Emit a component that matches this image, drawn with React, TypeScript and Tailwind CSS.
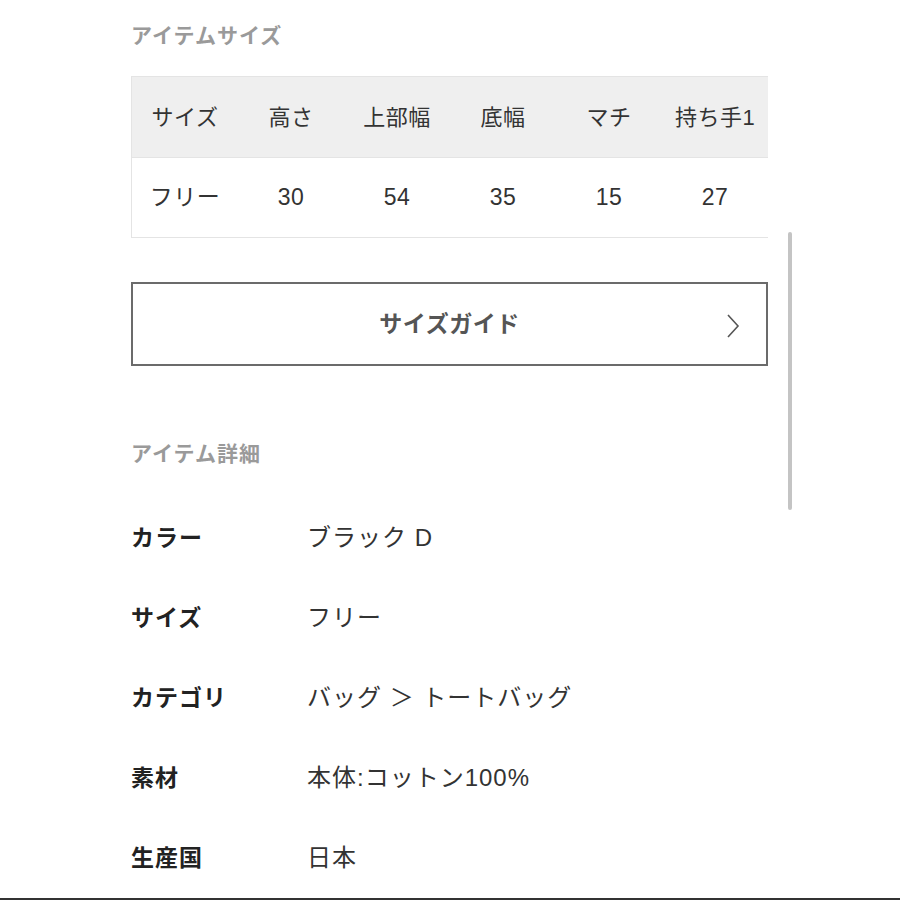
import React from "react";

const cols = [
  { head: "サイズ", val: "フリー" },
  { head: "高さ", val: "30" },
  { head: "上部幅", val: "54" },
  { head: "底幅", val: "35" },
  { head: "マチ", val: "15" },
  { head: "持ち手1", val: "27" },
];

const details = [
  { label: "カラー", value: "ブラック D" },
  { label: "サイズ", value: "フリー" },
  { label: "カテゴリ", value: "バッグ ＞ トートバッグ" },
  { label: "素材", value: "本体:コットン100%" },
  { label: "生産国", value: "日本" },
];

const font = { fontFamily: '"Liberation Sans", "Noto Sans CJK JP", sans-serif' };

export default function App() {
  return (
    <div
      className="relative w-[900px] h-[900px] overflow-hidden bg-white text-[#333]"
      style={font}
    >
      <div className="pl-[131px] w-[769px]">
        {/* アイテムサイズ */}
        <h2 className="pt-[24px] h-[76px] text-[21px] leading-[24px] font-bold tracking-[1px] text-[#9a9a9a]">
          アイテムサイズ
        </h2>

        <div className="w-[637px] border-t border-l border-b border-[#e4e4e4]">
          <div className="grid grid-cols-6 h-[81px] bg-[#efefef] items-center border-b border-[#e4e4e4]">
            {cols.map((c) => (
              <div key={c.head} className="text-center text-[22px] tracking-[0.5px] text-[#333]">
                {c.head}
              </div>
            ))}
          </div>
          <div className="grid grid-cols-6 h-[79px] items-center">
            {cols.map((c) => (
              <div key={c.head} className="text-center text-[23px] tracking-[0.5px] text-[#333]">
                {c.val}
              </div>
            ))}
          </div>
        </div>

        <button className="mt-[44px] w-[637px] h-[84px] border-2 border-[#6b6b6b] flex items-center relative bg-white">
          <span className="flex-1 text-center text-[23px] font-bold tracking-[0.5px] text-[#555]">
            サイズガイド
          </span>
          <svg
            className="absolute right-[26px] top-[30px]"
            width="14"
            height="24"
            viewBox="0 0 14 24"
            fill="none"
            stroke="#555"
            strokeWidth="1.6"
          >
            <path d="M2 1 L12 12 L2 23" />
          </svg>
        </button>

        {/* アイテム詳細 */}
        <h2 className="mt-[76px] text-[21px] leading-[24px] font-bold tracking-[1px] text-[#9a9a9a]">
          アイテム詳細
        </h2>

        <div className="mt-[32px]">
          {details.map((d) => (
            <div key={d.label} className="flex items-center h-[80px]">
              <div className="w-[176px] text-[23px] font-bold tracking-[1px] text-[#222]">{d.label}</div>
              <div className="text-[24px] tracking-[1px] text-[#333]">{d.value}</div>
            </div>
          ))}
        </div>
      </div>

      {/* scrollbar */}
      <div className="absolute left-[788px] top-[232px] w-[4px] h-[278px] rounded-full bg-[#c4c4c4]" />
      <div className="absolute left-0 bottom-0 w-full h-[2px] bg-[#333]" />
    </div>
  );
}
